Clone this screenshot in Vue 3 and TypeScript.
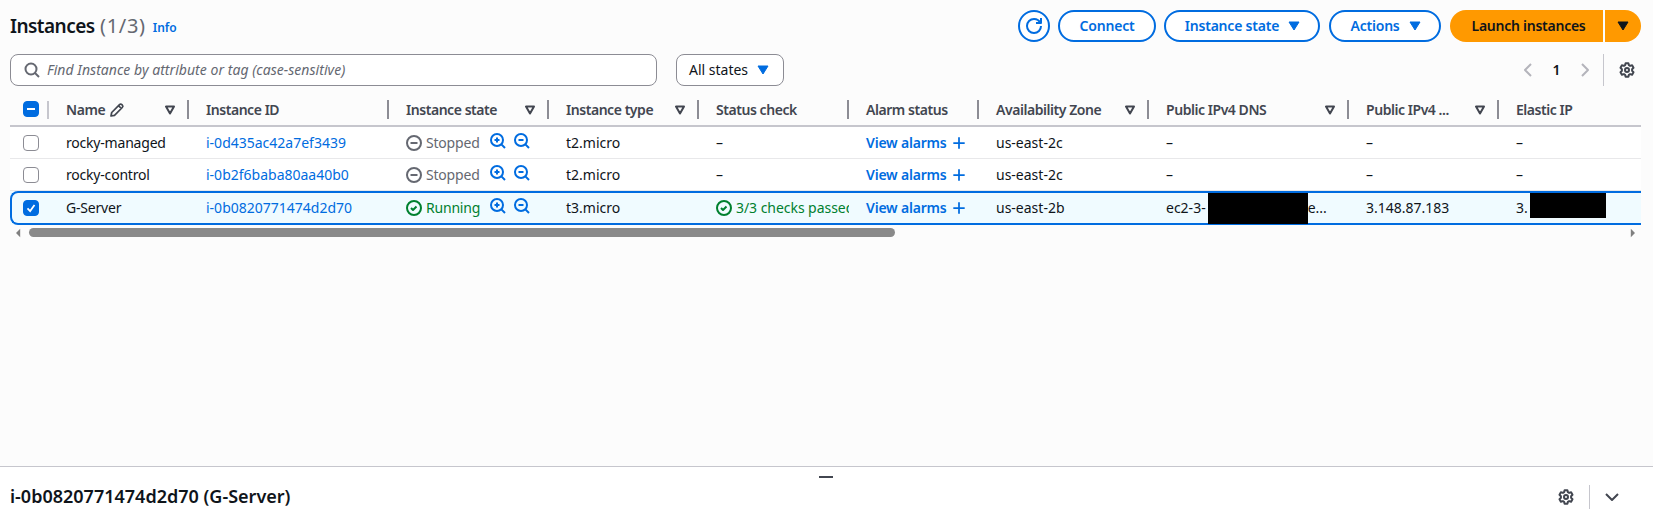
<script setup lang="ts">
interface Row {
  name: string
  id: string
  running: boolean
  type: string
  zone: string
  selected: boolean
}

const columns = [
  { label: 'Name', filter: true, edit: true },
  { label: 'Instance ID', filter: false },
  { label: 'Instance state', filter: true },
  { label: 'Instance type', filter: true },
  { label: 'Status check', filter: false },
  { label: 'Alarm status', filter: false },
  { label: 'Availability Zone', filter: true },
  { label: 'Public IPv4 DNS', filter: true },
  { label: 'Public IPv4 ...', filter: true },
  { label: 'Elastic IP', filter: false },
]

const rows: Row[] = [
  { name: 'rocky-managed', id: 'i-0d435ac42a7ef3439', running: false, type: 't2.micro', zone: 'us-east-2c', selected: false },
  { name: 'rocky-control', id: 'i-0b2f6baba80aa40b0', running: false, type: 't2.micro', zone: 'us-east-2c', selected: false },
  { name: 'G-Server', id: 'i-0b0820771474d2d70', running: true, type: 't3.micro', zone: 'us-east-2b', selected: true },
]

const gearPath =
  'M6.6 1.2h2.8l.5 2 1.2.7 2-.6 1.4 2.5-1.4 1.4v1.6l1.4 1.4-1.4 2.5-2-.6-1.2.7-.5 2H6.6l-.5-2-1.2-.7-2 .6-1.4-2.5 1.4-1.4V7.2L1.5 5.8l1.4-2.5 2 .6 1.2-.7z'
</script>

<template>
  <div class="page">
    <main class="main">
      <header class="top">
        <div class="title">
          <h1>Instances <span class="count">(1/3)</span></h1>
          <a class="info">Info</a>
        </div>
        <div class="actions">
          <button class="btn round" aria-label="Refresh">
            <svg class="ic" viewBox="0 0 16 16"><path d="M10 5h5V0" /><path d="M15 8a6.957 6.957 0 0 1-7 7 6.957 6.957 0 0 1-7-7 6.957 6.957 0 0 1 7-7 6.87 6.87 0 0 1 6.3 4" /></svg>
          </button>
          <button class="btn connect">Connect</button>
          <button class="btn state">Instance state
            <svg class="caret" viewBox="0 0 16 16"><path d="M3 4h10L8 12z" /></svg>
          </button>
          <button class="btn act">Actions
            <svg class="caret" viewBox="0 0 16 16"><path d="M3 4h10L8 12z" /></svg>
          </button>
          <div class="launch">
            <button class="launch-main">Launch instances</button>
            <button class="launch-more" aria-label="More">
              <svg class="caret" viewBox="0 0 16 16"><path d="M3 4h10L8 12z" /></svg>
            </button>
          </div>
        </div>
      </header>

      <div class="filters">
        <div class="search">
          <svg class="ic gray" viewBox="0 0 16 16"><circle cx="7" cy="7" r="5.5" /><path d="m15 15-4-4" /></svg>
          <span>Find Instance by attribute or tag (case-sensitive)</span>
        </div>
        <div class="select">All states
          <svg class="caret" viewBox="0 0 16 16"><path d="M3 4h10L8 12z" /></svg>
        </div>
        <div class="pager">
          <svg class="ic pale" viewBox="0 0 16 16"><path d="M11 2 5 8l6 6" /></svg>
          <span class="page-no">1</span>
          <svg class="ic pale" viewBox="0 0 16 16"><path d="m5 2 6 6-6 6" /></svg>
          <i class="pager-sep"></i>
          <svg class="ic dark" viewBox="0 0 16 16"><path :d="gearPath" /><circle cx="8" cy="8" r="2" /></svg>
        </div>
      </div>

      <div class="table">
        <div class="grid head">
          <div class="cb-cell">
            <span class="check on"><i class="dash"></i></span>
            <i class="light-sep"></i>
          </div>
          <div v-for="c in columns" :key="c.label" class="th">
            <span class="th-label">{{ c.label }}
              <svg v-if="c.edit" class="ic pencil" viewBox="0 0 16 16"><path d="M2 14l.7-3.5 7.8-7.8a1.7 1.7 0 0 1 2.4 0l.4.4a1.7 1.7 0 0 1 0 2.4l-7.8 7.8zM9.5 3.7l2.8 2.8" /></svg>
            </span>
            <svg v-if="c.filter" class="filter" viewBox="0 0 10 10"><path d="M1 1.5h8L5 8.5z" /></svg>
            <i v-if="c.label !== 'Elastic IP'" class="sep"></i>
          </div>
        </div>

        <div v-for="r in rows" :key="r.id" class="grid row" :class="{ selected: r.selected }">
          <div class="cb-cell">
            <span class="check" :class="{ on: r.selected }">
              <svg v-if="r.selected" viewBox="0 0 16 16" class="tick"><path d="M4 8.5 7 11.5 12 4.5" /></svg>
            </span>
          </div>
          <div class="td name">{{ r.name }}</div>
          <div class="td link">{{ r.id }}</div>
          <div class="td state-cell">
            <span class="status" :class="r.running ? 'ok' : 'off'">
              <svg class="ic" viewBox="0 0 16 16">
                <circle cx="8" cy="8" r="7" />
                <path v-if="r.running" d="m5 8 2 2 3.5-3.5" />
                <path v-else d="M4.5 8h7" />
              </svg>
              {{ r.running ? 'Running' : 'Stopped' }}
            </span>
            <svg class="ic blue zoom first" viewBox="0 0 16 16"><circle cx="7" cy="7" r="6" /><path d="M7 4.5v5M4.5 7h5M15 15l-3.6-3.6" /></svg>
            <svg class="ic blue zoom" viewBox="0 0 16 16"><circle cx="7" cy="7" r="6" /><path d="M4.5 7h5M15 15l-3.6-3.6" /></svg>
          </div>
          <div class="td">{{ r.type }}</div>
          <div class="td">
            <span v-if="r.running" class="status ok clip">
              <svg class="ic" viewBox="0 0 16 16"><circle cx="8" cy="8" r="7" /><path d="m5 8 2 2 3.5-3.5" /></svg>
              3/3 checks passed
            </span>
            <template v-else>–</template>
          </div>
          <div class="td alarm">View alarms
            <svg class="ic plus" viewBox="0 0 16 16"><path d="M1.5 8h13M8 1.5v13" /></svg>
          </div>
          <div class="td">{{ r.zone }}</div>
          <div class="td redact-cell">
            <template v-if="r.selected">ec2-3-<i class="redact dns"></i>e...</template>
            <template v-else>–</template>
          </div>
          <div class="td">{{ r.selected ? '3.148.87.183' : '–' }}</div>
          <div class="td redact-cell">
            <template v-if="r.selected">3.<i class="redact eip"></i></template>
            <template v-else>–</template>
          </div>
        </div>

        <div class="scrollbar">
          <svg class="arrow" viewBox="0 0 6 10"><path d="M5 0v10L0 5z" /></svg>
          <div class="track"><div class="thumb"></div></div>
          <svg class="arrow" viewBox="0 0 6 10"><path d="M1 0v10l5-5z" /></svg>
        </div>
      </div>
    </main>

    <footer class="panel">
      <i class="handle"></i>
      <h2>i-0b0820771474d2d70 (G-Server)</h2>
      <div class="panel-tools">
        <svg class="ic dark" viewBox="0 0 16 16"><path :d="gearPath" /><circle cx="8" cy="8" r="2" /></svg>
        <i class="panel-sep"></i>
        <svg class="ic dark" viewBox="0 0 16 16"><path d="m2 5 6 6 6-6" /></svg>
      </div>
    </footer>
  </div>
</template>

<style>
html, body { margin: 0; background: #fff; }
</style>

<style scoped>
.page {
  width: 1653px;
  height: 527px;
  display: flex;
  flex-direction: column;
  overflow: hidden;
  font: 14px/20px "Noto Sans", "Open Sans", sans-serif;
  color: #0f141a;
  background: #fcfcfc;
}
.main { flex: 1; padding: 10px 10px 0; box-sizing: border-box; }
.top { display: flex; justify-content: space-between; height: 32px; }
.title { display: flex; align-items: center; }
h1 { margin: 0; font-size: 19px; line-height: 32px; font-weight: 600; letter-spacing: -0.55px; }
.count { font-weight: 400; font-size: 20px; letter-spacing: 0.7px; color: #656871; margin-left: 1px; }
.info { margin-left: 7px; margin-top: 3px; font-size: 12px; font-weight: 600; color: #006ce0; }
.actions { display: flex; gap: 8px; padding-right: 2px; }
button { font: inherit; cursor: pointer; }
.btn {
  box-sizing: border-box;
  height: 32px;
  border: 2px solid #006ce0;
  border-radius: 16px;
  background: #fff;
  color: #006ce0;
  font-weight: 600;
  letter-spacing: -0.2px;
  display: flex;
  align-items: center;
  justify-content: center;
  gap: 7px;
  padding: 0;
}
.round { width: 32px; border-radius: 50%; }
.connect { width: 98px; }
.state { width: 156px; padding-left: 3px; }
.act { width: 112px; margin-left: 1px; padding-left: 3px; }
.launch { display: flex; margin-left: 1px; height: 32px; gap: 2px; }
.launch button { border: 0; background: #ff9900; color: #0f141a; font-weight: 600; letter-spacing: -0.25px; padding: 0; }
.launch .launch-main { width: 153px; border-radius: 16px 0 0 16px; padding-left: 4px; }
.launch-more { width: 36px; border-radius: 0 16px 16px 0; display: flex; align-items: center; justify-content: center; }
.ic { width: 16px; height: 16px; flex: none; fill: none; stroke: currentColor; stroke-width: 2; stroke-linejoin: round; overflow: visible; }
.caret { width: 16px; height: 16px; flex: none; fill: currentColor; stroke: currentColor; stroke-width: 1; stroke-linejoin: round; }
.gray { color: #656871; }
.pale { color: #b4b4bb; }
.dark { color: #424650; }
.blue { color: #006ce0; }

.filters { display: flex; align-items: center; margin-top: 12px; height: 32px; }
.search {
  box-sizing: border-box;
  width: 647px;
  height: 32px;
  display: flex;
  align-items: center;
  gap: 7px;
  padding-left: 13px;
  background: #fff;
  border: 1px solid #8c8c94;
  border-radius: 8px;
  color: #656871;
  font-style: italic;
  letter-spacing: 0.04px;
}
.select {
  box-sizing: border-box;
  margin-left: 19px;
  width: 108px;
  height: 32px;
  display: flex;
  align-items: center;
  gap: 7px;
  padding-left: 12px;
  background: #fff;
  border: 1px solid #8c8c94;
  border-radius: 8px;
}
.select .caret { color: #006ce0; }
.pager { margin-left: auto; display: flex; align-items: center; padding-right: 8px; }
.page-no { width: 41px; text-align: center; font-weight: 600; }
.pager-sep { width: 1px; height: 32px; background: #c6c6cd; margin: 0 15px 0 10px; }

.table { margin-top: 6px; width: 1631px; }
.grid {
  display: grid;
  grid-template-columns: 39px 140px 200px 160px 150px 150px 130px 170px 200px 150px 142px;
  width: 1631px;
}
.head { height: 35px; border-bottom: 2px solid #c6c6cd; box-sizing: border-box; color: #424650; font-weight: 600; letter-spacing: -0.45px; }
.cb-cell { position: relative; display: flex; align-items: center; padding-left: 13px; }
.head .cb-cell { padding-top: 1px; }
.check {
  box-sizing: border-box;
  width: 16px;
  height: 16px;
  border: 1px solid #8c8c94;
  border-radius: 4px;
  background: #fff;
  display: flex;
  align-items: center;
  justify-content: center;
}
.check.on { background: #006ce0; border-color: #006ce0; }
.dash { width: 8px; height: 2px; background: #fff; }
.tick { width: 14px; height: 14px; fill: none; stroke: #fff; stroke-width: 2; }
.light-sep { position: absolute; right: 0; top: 9px; height: 18px; width: 2px; background: #c6c6cd; }
.th { position: relative; display: flex; align-items: center; padding: 3px 0 0 17px; }
.th-label { display: flex; align-items: center; gap: 4px; white-space: nowrap; }
.pencil { width: 16px; height: 16px; stroke-width: 1.7; }
.filter {
  position: absolute;
  right: 14px;
  top: 13px;
  width: 10px;
  height: 10px;
  fill: none;
  stroke: #424650;
  stroke-width: 2;
  stroke-linejoin: round;
}
.sep { position: absolute; right: 0; top: 8px; width: 2px; height: 19px; background: #8c8c94; }

.row { position: relative; height: 32px; background: #fff; border-bottom: 1px solid #e8e8ea; box-sizing: border-box; }
.row.selected {
  height: 34px;
  background: #f0fbff;
  border-bottom: 0;
}
.row.selected::after {
  content: "";
  position: absolute;
  inset: 0;
  border: 2px solid #006ce0;
  border-right: 0;
  border-radius: 8px 0 0 8px;
  pointer-events: none;
}
.td {
  display: flex;
  align-items: center;
  padding-left: 17px;
  white-space: nowrap;
  overflow: hidden;
}
.row:not(.selected) .td { padding-top: 1px; }
.name { letter-spacing: -0.2px; }
.link { color: #006ce0; }
.status { display: flex; align-items: center; gap: 4px; letter-spacing: -0.2px; }
.status.ok { color: #00802f; }
.status.off { color: #656871; }
.state-cell .status { width: 84px; }
.zoom { margin-top: -5px; }
.zoom.first { margin-right: 8px; }
.clip { width: 133px; overflow: hidden; letter-spacing: -0.05px; }
.alarm { color: #006ce0; font-weight: 600; gap: 5px; letter-spacing: -0.2px; }
.plus { width: 14px; height: 14px; }
.redact-cell { overflow: visible; }
.redact { position: relative; z-index: 1; display: block; flex: none; background: #000; align-self: flex-start; margin-top: 2px; }
.dns { width: 100px; height: 31px; margin-left: 2px; }
.eip { width: 76px; height: 25px; margin-left: 2px; }

.scrollbar { display: flex; align-items: center; height: 9px; margin-top: 3px; padding: 0 6px; width: 1631px; box-sizing: border-box; }
.arrow { width: 5px; height: 10px; flex: none; fill: #808080; }
.track { flex: 1; height: 9px; }
.thumb { width: 866px; height: 9px; border-radius: 5px; background: #8a8a8a; margin-left: 8px; }

.panel {
  position: relative;
  box-sizing: border-box;
  height: 61px;
  border-top: 1px solid #c6c6cd;
  background: #fff;
  display: flex;
  align-items: center;
  justify-content: space-between;
  padding: 0 33px 0 10px;
}
h2 { margin: 0; font-size: 18px; line-height: 22px; font-weight: 600; padding-bottom: 2px; }
.handle { position: absolute; left: 819px; top: 9px; width: 14px; height: 2px; background: #424650; }
.panel-tools { display: flex; align-items: center; }
.panel-sep { width: 1px; height: 24px; background: #c6c6cd; margin: 0 14px 0 15px; }
</style>
